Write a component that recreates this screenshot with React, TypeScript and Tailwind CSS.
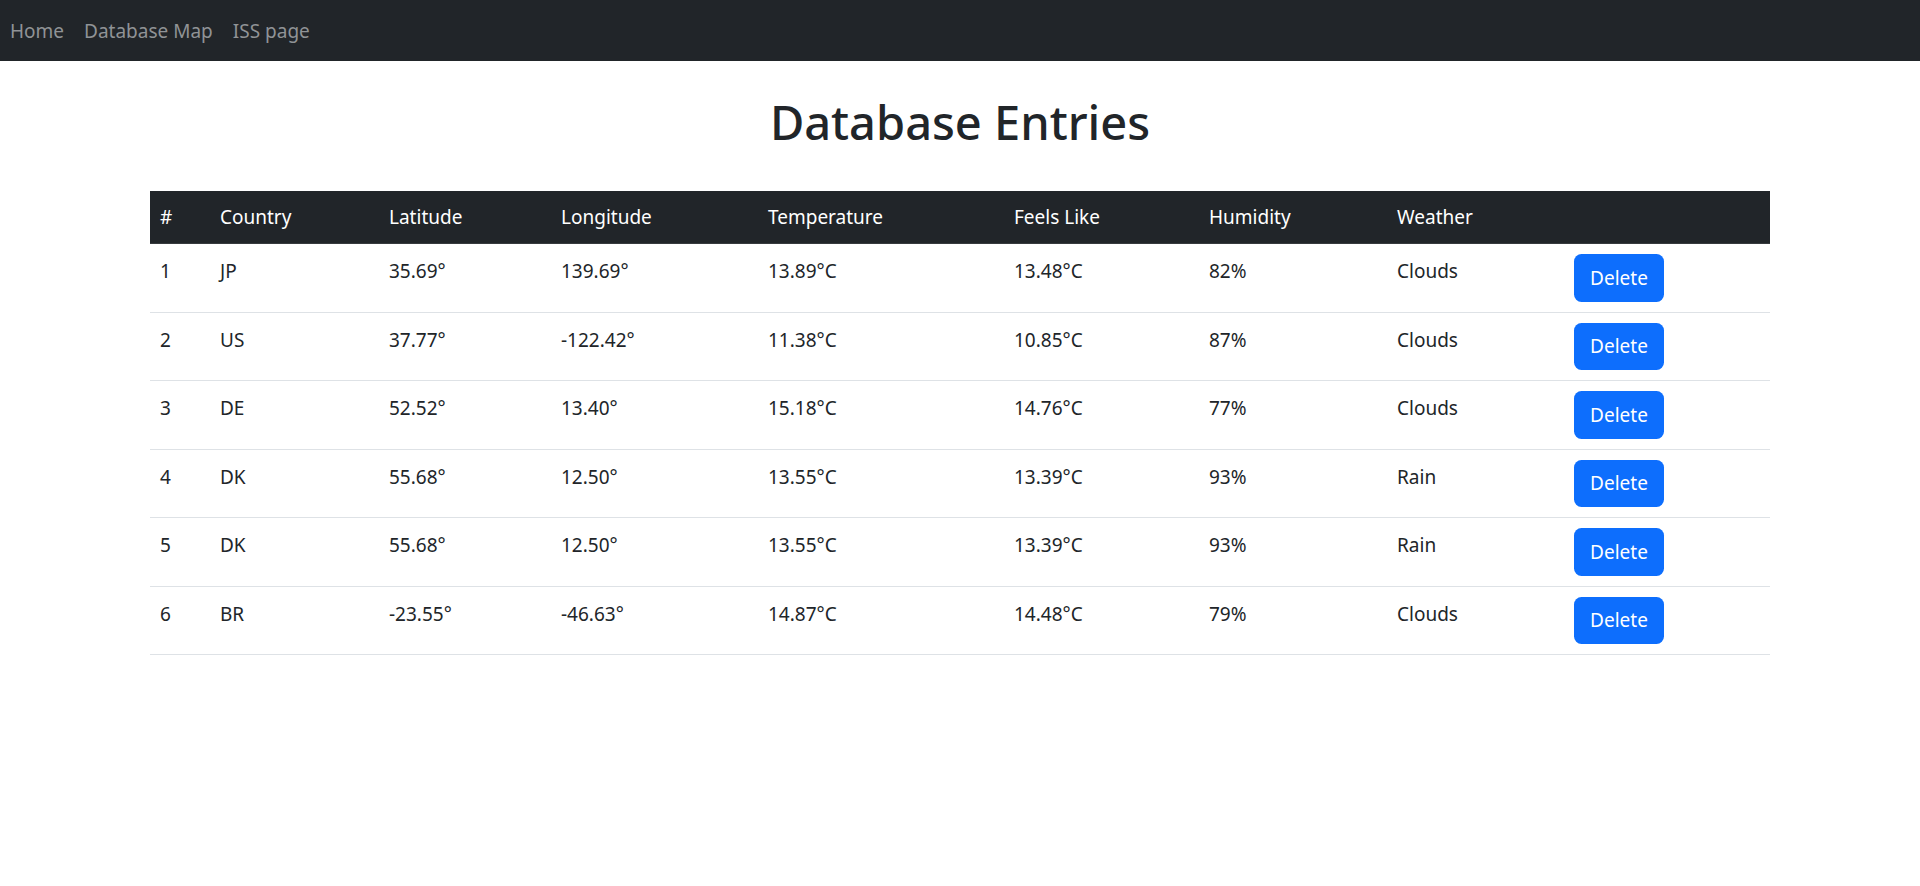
import React from 'react'

type Entry = {
  id: number
  country: string
  lat: string
  lon: string
  temp: string
  feels: string
  humidity: string
  weather: string
}

const entries: Entry[] = [
  { id: 1, country: 'JP', lat: '35.69°', lon: '139.69°', temp: '13.89°C', feels: '13.48°C', humidity: '82%', weather: 'Clouds' },
  { id: 2, country: 'US', lat: '37.77°', lon: '-122.42°', temp: '11.38°C', feels: '10.85°C', humidity: '87%', weather: 'Clouds' },
  { id: 3, country: 'DE', lat: '52.52°', lon: '13.40°', temp: '15.18°C', feels: '14.76°C', humidity: '77%', weather: 'Clouds' },
  { id: 4, country: 'DK', lat: '55.68°', lon: '12.50°', temp: '13.55°C', feels: '13.39°C', humidity: '93%', weather: 'Rain' },
  { id: 5, country: 'DK', lat: '55.68°', lon: '12.50°', temp: '13.55°C', feels: '13.39°C', humidity: '93%', weather: 'Rain' },
  { id: 6, country: 'BR', lat: '-23.55°', lon: '-46.63°', temp: '14.87°C', feels: '14.48°C', humidity: '79%', weather: 'Clouds' },
]

// column widths measured off the reference
const columns = [
  { label: '#', w: 'w-[60px]' },
  { label: 'Country', w: 'w-[169px]' },
  { label: 'Latitude', w: 'w-[172px]' },
  { label: 'Longitude', w: 'w-[207px]' },
  { label: 'Temperature', w: 'w-[246px]' },
  { label: 'Feels Like', w: 'w-[195px]' },
  { label: 'Humidity', w: 'w-[188px]' },
  { label: 'Weather', w: 'w-[177px]' },
  { label: '', w: 'w-[206px]' },
]

function NavBar() {
  const links = ['Home', 'Database Map', 'ISS page']
  return (
    <nav className="flex h-[61px] items-center bg-[#212529]">
      {links.map((l) => (
        <a key={l} href="#" className="px-[10px] text-[19px] leading-[30px] text-[#909396]">
          {l}
        </a>
      ))}
    </nav>
  )
}

const cell = 'px-[10px] pt-[12px] pb-[8px] align-top'

export default function App() {
  return (
    <div className="min-h-screen bg-white font-['Noto_Sans',sans-serif] text-[#212529]">
      <NavBar />
      <main className="mx-auto w-[1620px]">
        <h1 className="pt-[31px] pb-[39px] text-center text-[47px] leading-[60px] font-medium">
          Database Entries
        </h1>
        <table className="w-full table-fixed border-collapse text-left text-[19px] leading-[30px]">
          <thead>
            <tr className="bg-[#212529] text-white">
              {columns.map((c) => (
                <th key={c.label} className={`${c.w} px-[10px] py-[11px] font-normal border-b border-[#373b3e]`}>
                  {c.label}
                </th>
              ))}
            </tr>
          </thead>
          <tbody>
            {entries.map((e) => (
              <tr key={e.id} className="border-b border-[#dee2e6]">
                <td className={cell}>{e.id}</td>
                <td className={cell}>{e.country}</td>
                <td className={cell}>{e.lat}</td>
                <td className={cell}>{e.lon}</td>
                <td className={cell}>{e.temp}</td>
                <td className={cell}>{e.feels}</td>
                <td className={cell}>{e.humidity}</td>
                <td className={cell}>{e.weather}</td>
                <td className="px-[10px] py-[10px] align-top">
                  <button className="h-[47.5px] w-[90px] rounded-[7.5px] bg-[#0d6efd] text-[19px] text-white">
                    Delete
                  </button>
                </td>
              </tr>
            ))}
          </tbody>
        </table>
      </main>
    </div>
  )
}
